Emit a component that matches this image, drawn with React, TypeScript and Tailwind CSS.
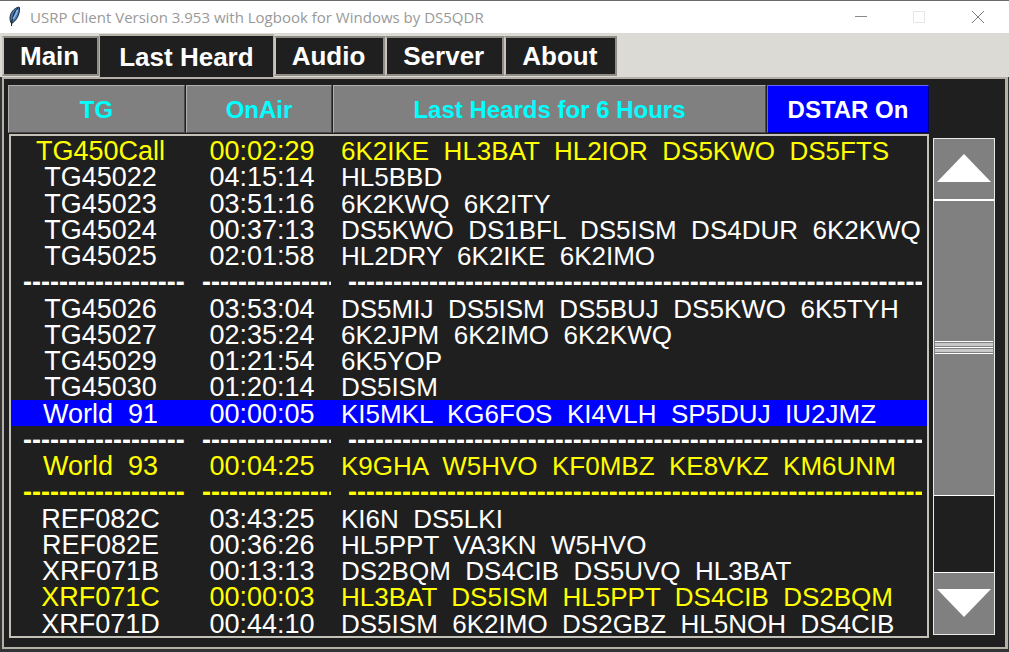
import { useState } from 'react';

type Row = {
    tg: string;
    time: string;
    calls: string;
    tone?: 'yellow' | 'selected';
    rule?: boolean;
};

const divider = { tg: '-'.repeat(18), time: '-'.repeat(15), calls: '-'.repeat(64), rule: true };

const rows: Row[] = [
    { tg: 'TG450Call', time: '00:02:29', calls: '6K2IKE  HL3BAT  HL2IOR  DS5KWO  DS5FTS', tone: 'yellow' },
    { tg: 'TG45022', time: '04:15:14', calls: 'HL5BBD' },
    { tg: 'TG45023', time: '03:51:16', calls: '6K2KWQ  6K2ITY' },
    { tg: 'TG45024', time: '00:37:13', calls: 'DS5KWO  DS1BFL  DS5ISM  DS4DUR  6K2KWQ' },
    { tg: 'TG45025', time: '02:01:58', calls: 'HL2DRY  6K2IKE  6K2IMO' },
    divider,
    { tg: 'TG45026', time: '03:53:04', calls: 'DS5MIJ  DS5ISM  DS5BUJ  DS5KWO  6K5TYH' },
    { tg: 'TG45027', time: '02:35:24', calls: '6K2JPM  6K2IMO  6K2KWQ' },
    { tg: 'TG45029', time: '01:21:54', calls: '6K5YOP' },
    { tg: 'TG45030', time: '01:20:14', calls: 'DS5ISM' },
    { tg: 'World  91', time: '00:00:05', calls: 'KI5MKL  KG6FOS  KI4VLH  SP5DUJ  IU2JMZ', tone: 'selected' },
    divider,
    { tg: 'World  93', time: '00:04:25', calls: 'K9GHA  W5HVO  KF0MBZ  KE8VKZ  KM6UNM', tone: 'yellow' },
    { ...divider, tone: 'yellow' },
    { tg: 'REF082C', time: '03:43:25', calls: 'KI6N  DS5LKI' },
    { tg: 'REF082E', time: '00:36:26', calls: 'HL5PPT  VA3KN  W5HVO' },
    { tg: 'XRF071B', time: '00:13:13', calls: 'DS2BQM  DS4CIB  DS5UVQ  HL3BAT' },
    { tg: 'XRF071C', time: '00:00:03', calls: 'HL3BAT  DS5ISM  HL5PPT  DS4CIB  DS2BQM', tone: 'yellow' },
    { tg: 'XRF071D', time: '00:44:10', calls: 'DS5ISM  6K2IMO  DS2GBZ  HL5NOH  DS4CIB' },
];

const tabs = ['Main', 'Last Heard', 'Audio', 'Server', 'About'];

function Feather() {
    return (
        <svg width="14" height="22" viewBox="0 0 14 22" aria-hidden="true">
            <path d="M11 1C6 2 2 7 2 12c0 2 .5 4 1.500 5.500C8 15 12 9 11.500 1.500z" fill="#4679b8" stroke="#1d2733" strokeWidth="1" />
            <path d="M10 2C6 6 4 11 3.500 20" fill="none" stroke="#16191f" strokeWidth="1" />
            <path d="M9.500 4c-1 4-3 7-4.500 9" fill="none" stroke="#8db6e2" strokeWidth="1.500" />
        </svg>
    );
}

function TitleBar() {
    return (
        <header className="flex h-[33px] items-center border-t border-[#6d6a68] bg-white pl-2 text-[#999999]">
            <Feather />
            <h1 className="ml-2 flex-1 pb-px whitespace-nowrap font-['Open_Sans','Noto_Sans',sans-serif] text-[15px] leading-5">
                USRP Client Version 3.953 with Logbook for Windows by DS5QDR
            </h1>
            <button aria-label="Minimize" className="flex h-8 w-[58px] items-center justify-center">
                <svg width="12" height="12" viewBox="0 0 12 12"><path d="M0 5.500h12" stroke="#8a8a8a" /></svg>
            </button>
            <button aria-label="Maximize" disabled className="flex h-8 w-[58px] items-center justify-center">
                <svg width="12" height="12" viewBox="0 0 12 12"><path d="M.5.5h11v11H.5z" fill="none" stroke="#e6e6e6" /></svg>
            </button>
            <button aria-label="Close" className="mr-px flex h-8 w-[60px] items-center justify-center">
                <svg width="12" height="12" viewBox="0 0 12 12"><path d="M0 0l12 12M12 0L0 12" stroke="#808080" /></svg>
            </button>
        </header>
    );
}

function ScrollBar() {
    return (
        <div className="mt-[4px] mb-[3px] flex w-[62px] shrink-0 flex-col border border-[#e8e8e8] bg-[#1f1f1f]">
            <button aria-label="Scroll up" className="flex h-[62px] items-center justify-center border-b-2 border-white bg-[#808080] pb-[2px]">
                <svg width="54" height="28" viewBox="0 0 54 28"><path d="M27 0L54 28H0z" fill="#fff" /></svg>
            </button>
            <div className="flex h-[295px] items-center border-b border-white bg-[#808080] px-px pb-px">
                <div className="flex h-[13px] w-full flex-col justify-between">
                    <span className="h-px bg-white" />
                    <span className="h-[3px] bg-[#c8c8c8]" />
                    <span className="h-px bg-white" />
                    <span className="h-[3px] bg-[#c8c8c8]" />
                    <span className="h-px bg-white" />
                </div>
            </div>
            <button aria-label="Scroll down" className="mt-auto flex h-[62px] items-center justify-center border-t border-white bg-[#808080] pb-[2px]">
                <svg width="54" height="28" viewBox="0 0 54 28"><path d="M0 0h54L27 28z" fill="#fff" /></svg>
            </button>
        </div>
    );
}

export default function App() {
    const [tab, setTab] = useState('Last Heard');
    const head = 'border border-t-[#b0b0b0] border-l-[#b0b0b0] border-r-[#4a4a4a] border-b-[#4a4a4a] bg-[#808080] pt-px text-[#00ffff]';

    return (
        <div className="flex min-h-screen flex-col bg-[#333333] font-['Liberation_Sans',Arial,sans-serif]">
            <TitleBar />

            {/* Tabs */}
            <nav className="flex h-[44px] items-end bg-[#dbdad4] pl-[2px]">
                {tabs.map((name) => (
                    <button
                        key={name}
                        onClick={() => setTab(name)}
                        className={
                            name === tab
                                ? 'h-[43px] border-x border-t-2 border-[#b5b1a8] bg-[#1f1f1f] px-[19px] text-[26px] leading-6 font-bold whitespace-nowrap text-white'
                                : 'mb-px h-[40px] border-2 border-[#8f8c85] border-l-[#c8c4bc] bg-[#1f1f1f] pr-[18px] pl-[16px] text-[26px] leading-6 font-bold whitespace-nowrap text-white'
                        }
                    >
                        {name}
                    </button>
                ))}
            </nav>

            {/* Page */}
            <main className="mr-px mb-[3px] ml-[2px] flex-1 border-2 border-r-3 border-[#b5b1a8] bg-[#1f1f1f] pt-[6px] pr-[10px] pb-[8px] pl-[4px]">
                <div className="flex h-[48px] pr-[66px] text-[24px] font-bold">
                    <button className={`${head} w-[177px]`}>TG</button>
                    <button className={`${head} ml-px w-[146px]`}>OnAir</button>
                    <button className={`${head} ml-px flex-1`}>Last Heards for 6 Hours</button>
                    <button className="ml-px w-[162px] border border-t-[#6666ff] border-r-[#00007a] border-b-[#00007a] border-l-[#6666ff] bg-[#0000ff] pt-px text-white">
                        DSTAR On
                    </button>
                </div>
                <div className="mt-px ml-px flex gap-[4px]">
                    <div className="min-w-0 flex-1 border-2 border-[#c4c1b9] pt-px">
                        <table className="h-[499px] w-full table-fixed border-collapse text-[27px] leading-[23px] whitespace-pre">
                            <colgroup>
                                <col className="w-[174px]" />
                                <col className="w-[146px]" />
                                <col />
                            </colgroup>
                            <tbody>
                                {rows.map((row, idx) => {
                                    const tone =
                                        row.tone === 'selected'
                                            ? 'bg-[#0000ff] text-white'
                                            : row.tone === 'yellow'
                                              ? 'text-[#ffff00]'
                                              : 'text-white';
                                    return (
                                        <tr key={idx} className={tone}>
                                            <td className={row.rule ? 'pt-[3px] pl-3 font-bold' : 'pt-[3px] pl-[5px] text-center'}>
                                                <div className="overflow-x-clip">{row.tg}</div>
                                            </td>
                                            <td className={row.rule ? 'pt-[3px] pl-[17px] font-bold' : 'pt-[3px] pl-2 text-center'}>
                                                <div className="overflow-x-clip">{row.time}</div>
                                            </td>
                                            <td className={row.rule ? 'pt-[3px] pr-[5px] pl-[17px] font-bold' : 'pt-[3px] pr-[5px] pl-[10px] text-[26px]'}>
                                                <div className="overflow-x-clip">{row.calls}</div>
                                            </td>
                                        </tr>
                                    );
                                })}
                            </tbody>
                        </table>
                    </div>
                    <ScrollBar />
                </div>
            </main>
        </div>
    );
}
